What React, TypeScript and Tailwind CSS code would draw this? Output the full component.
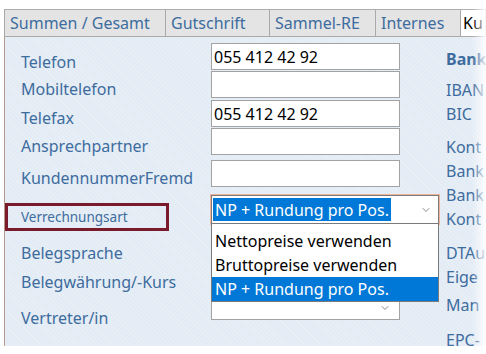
import { ChevronDown } from 'lucide-react';

const font = { fontFamily: '"Segoe UI", "Noto Sans", sans-serif' };

function Tab({ label, active = false, w }: { label: string; active?: boolean; w: string }) {
  return (
    <div
      className={`${w} shrink-0 whitespace-nowrap h-[27px] flex items-center border-r border-t border-[#a9a9a9] text-[16px] leading-none ${
        active ? 'bg-white text-black px-[2px]' : 'bg-[#e4e4e4] text-[#3d6c9e] px-[5px]'
      }`}
    >
      {label}
    </div>
  );
}

function Field({ value = '' }: { value?: string }) {
  return (
    <div className="w-[189px] h-[27px] bg-white border border-[#a3a3a3] px-[2px] flex items-center text-[16px] text-black">
      {value}
    </div>
  );
}

export default function App() {
  return (
    <div className="relative w-[486px] h-[354px] bg-white overflow-hidden text-[#3d6c9e]" style={font}>
      <div className="pt-[9px]">
        {/* Tabs */}
        <div className="flex ml-[4px] overflow-hidden border-l border-[#a9a9a9] border-b border-b-[#a9a9a9]">
          <Tab label="Summen / Gesamt" w="w-[161px]" />
          <Tab label="Gutschrift" w="w-[104px]" />
          <Tab label="Sammel-RE" w="w-[106px]" />
          <Tab label="Internes" w="w-[85px]" />
          <Tab label="Ku" w="w-[25px]" active />
        </div>

        {/* Panel */}
        <div className="ml-[4px] h-[309px] border-l border-[#b59a8c] bg-[#e3ebf4] bg-[repeating-linear-gradient(45deg,#e3ebf4_0px,#e3ebf4_2px,#e8eff7_2px,#e8eff7_3px)] flex">
          {/* labels + fields */}
          <div className="w-[434px] shrink-0 pt-[6px] flex flex-col">
            <div className="flex h-[28px]">
              <div className="w-[206px] pl-[16px] pt-[7px] text-[16px]">Telefon</div>
              <Field value="055 412 42 92" />
            </div>
            <div className="flex h-[29px]">
              <div className="w-[206px] pl-[16px] pt-[6px] text-[16px]">Mobiltelefon</div>
              <Field />
            </div>
            <div className="flex h-[28px]">
              <div className="w-[206px] pl-[16px] pt-[6px] text-[16px]">Telefax</div>
              <Field value="055 412 42 92" />
            </div>
            <div className="flex h-[32px]">
              <div className="w-[206px] pl-[16px] pt-[6px] text-[16px]">Ansprechpartner</div>
              <Field />
            </div>
            <div className="flex h-[35px]">
              <div className="w-[206px] pl-[16px] pt-[6px] text-[16px]">KundennummerFremd</div>
              <Field />
            </div>
            {/* Verrechnungsart */}
            <div className="relative flex h-[30px]">
              <div className="w-[206px] pt-[8px]">
                <div className="w-[164px] h-[28px] border-[3px] border-[#7a1b2c] pl-[13px] flex items-center text-[13.5px]">
                  Verrechnungsart
                </div>
              </div>
              <div className="w-[228px] h-[29px] bg-white border border-[#7a7a7a] ring-1 ring-[#f0b49a] flex items-center pl-[1px] pr-[6px] text-[16px]">
                <span className="bg-[#0078d7] text-white px-[2px] h-[23px] flex items-center">NP + Rundung pro Pos.</span>
                <ChevronDown size={12} strokeWidth={1.5} className="ml-auto text-[#606060]" />
              </div>
              {/* open list */}
              <div className="absolute left-[206px] top-[29px] w-[228px] bg-white border border-[#7a7a7a] border-t-0 text-black text-[16px] z-10">
                <div className="h-[5px]" />
                <div className="h-[24px] pl-[3px] flex items-center">Nettopreise verwenden</div>
                <div className="h-[24px] pl-[3px] flex items-center">Bruttopreise verwenden</div>
                <div className="h-[24px] pl-[3px] flex items-center bg-[#0078d7] text-white">NP + Rundung pro Pos.</div>
              </div>
            </div>
            <div className="flex h-[32px]">
              <div className="w-[206px] pl-[16px] pt-[16px] text-[16px]">Belegsprache</div>
            </div>
            <div className="flex h-[38px]">
              <div className="w-[206px] pl-[16px] pt-[13px] text-[16px]">Belegwährung/-Kurs</div>
            </div>
            <div className="flex h-[30px]">
              <div className="w-[206px] pl-[16px] pt-[11px] text-[16px]">Vertreter/in</div>
              <div className="w-[189px] h-[25px] bg-white border border-[#a3a3a3] flex items-center pr-[8px]">
                <ChevronDown size={12} strokeWidth={1.5} className="ml-auto text-[#606060]" />
              </div>
            </div>
          </div>

          {/* right column, cut off at the edge */}
          <div className="pl-[7px] pt-[10px] flex flex-col text-[16px] leading-[24px] whitespace-nowrap">
            <div className="font-bold">Bank</div>
            <div className="mt-[7px]">IBAN</div>
            <div>BIC</div>
            <div className="mt-[9px]">Kont</div>
            <div>Bank</div>
            <div>Bank</div>
            <div>Kont</div>
            <div className="mt-[10px]">DTAu</div>
            <div>Eige</div>
            <div className="mt-[4px]">Man</div>
            <div className="mt-[11px]">EPC-</div>
          </div>
        </div>
      </div>

      {/* torn-edge fade overlays */}
      <div className="absolute top-0 left-0 right-0 h-[10px] bg-gradient-to-b from-white to-transparent pointer-events-none" />
      <div className="absolute top-0 bottom-0 right-0 w-[14px] bg-gradient-to-l from-white/90 to-transparent pointer-events-none" />
      <div className="absolute bottom-0 left-0 right-0 h-[9px] bg-gradient-to-t from-white to-transparent pointer-events-none" />
    </div>
  );
}
